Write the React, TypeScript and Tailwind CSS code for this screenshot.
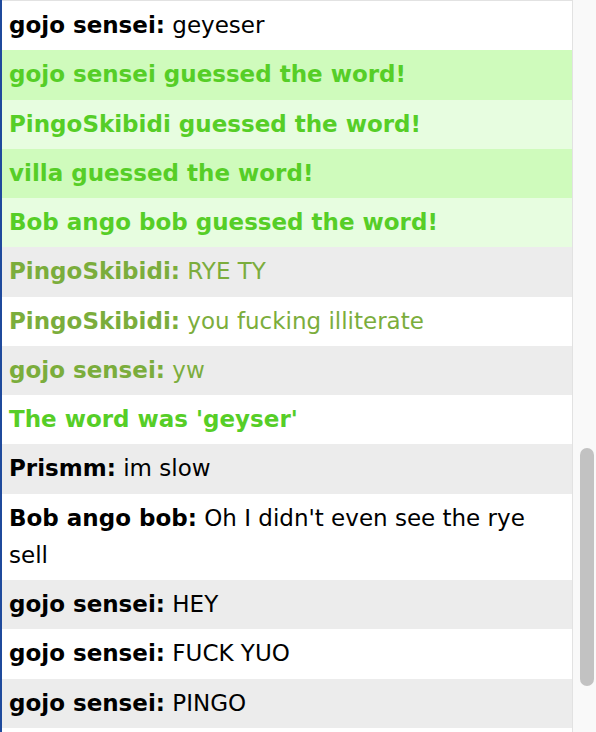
import React from "react";

type Msg = {
    name?: string;
    text: string;
    kind: "plain" | "guess" | "close" | "info";
};

const messages: Msg[] = [
    { name: "gojo sensei", text: "geyeser", kind: "plain" },
    { text: "gojo sensei guessed the word!", kind: "guess" },
    { text: "PingoSkibidi guessed the word!", kind: "guess" },
    { text: "villa guessed the word!", kind: "guess" },
    { text: "Bob ango bob guessed the word!", kind: "guess" },
    { name: "PingoSkibidi", text: "RYE TY", kind: "close" },
    { name: "PingoSkibidi", text: "you fucking illiterate", kind: "close" },
    { name: "gojo sensei", text: "yw", kind: "close" },
    { text: "The word was 'geyser'", kind: "info" },
    { name: "Prismm", text: "im slow", kind: "plain" },
    { name: "Bob ango bob", text: "Oh I didn't even see the rye sell", kind: "plain" },
    { name: "gojo sensei", text: "HEY", kind: "plain" },
    { name: "gojo sensei", text: "FUCK YUO", kind: "plain" },
    { name: "gojo sensei", text: "PINGO", kind: "plain" },
];

const rowBg = (msg: Msg, i: number) => {
    if (msg.kind === "guess") return i % 2 === 1 ? "bg-[#cffbbc]" : "bg-[#e7fde0]";
    return i % 2 === 1 ? "bg-[#ececec]" : "bg-white";
};

const ChatRow = ({ msg, index }: { msg: Msg; index: number }) => {
    const color =
        msg.kind === "close" ? "text-[#7bad3c]" : msg.kind === "plain" ? "text-black" : "text-[#56ce27]";

    return (
        <div className={`px-[7px] py-[6px] leading-[37.25px] ${rowBg(msg, index)} ${color}`}>
            {msg.name ? (
                <>
                    <b className="font-bold">{msg.name}:</b> {msg.text}
                </>
            ) : (
                <b className="font-bold">{msg.text}</b>
            )}
        </div>
    );
};

export default function App() {
    return (
        <div className="flex h-[732px] w-[596px] overflow-hidden bg-[#1f4a9c]">
            <div
                className="ml-[2px] flex-1 overflow-hidden border-t border-r border-[#e2e2e2] bg-white text-[23px]"
                style={{ fontFamily: "'DejaVu Sans', sans-serif" }}
            >
                {messages.map((msg, i) => (
                    <ChatRow key={i} msg={msg} index={i} />
                ))}
            </div>
            <div className="w-[23px] bg-[#f9f9f9] pt-[448px] pl-[7px] pr-[2px]">
                <div className="h-[238px] rounded-full bg-[#c2c2c2]" />
            </div>
        </div>
    );
}
